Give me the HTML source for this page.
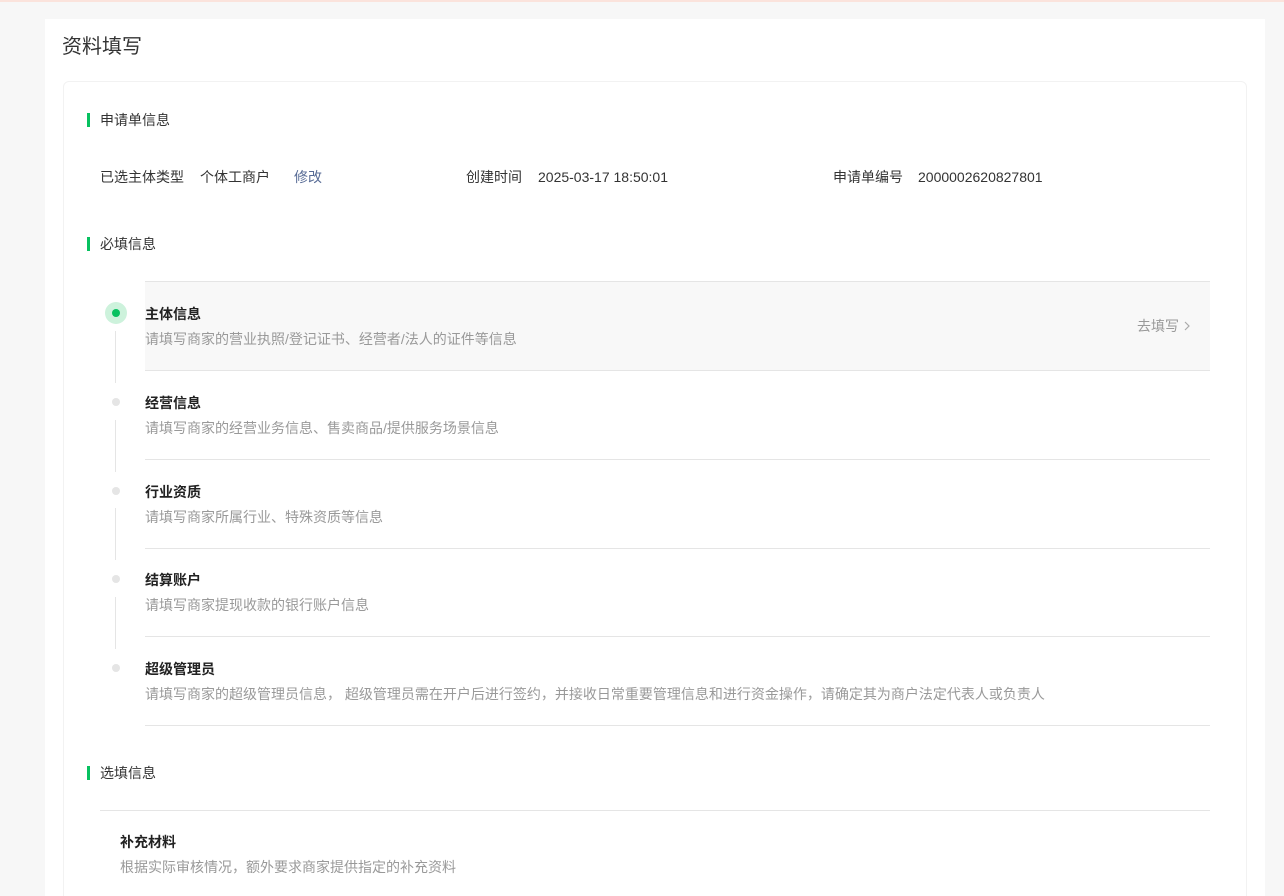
<!DOCTYPE html>
<html><head><meta charset="utf-8"><style>
*{margin:0;padding:0;box-sizing:border-box}
html,body{width:1284px;height:896px;overflow:hidden}
body{background:#f7f7f7;font-family:"Liberation Sans","Noto Sans CJK SC",sans-serif;color:#333;position:relative}
.a{position:absolute;white-space:nowrap}
.topline{position:absolute;left:0;top:0;width:1284px;height:2px;background:#fbe3dc}
.panel{position:absolute;left:45px;top:19px;width:1220px;height:877px;background:#fff}
.card{position:absolute;left:63px;top:81px;width:1184px;height:830px;border:1px solid #f2f2f2;border-radius:6px;background:#fff}
.sec{position:absolute;left:87px;font-size:14px;color:#333;line-height:14px;padding-left:13px}
.sec:before{content:"";position:absolute;left:0;top:0;width:3px;height:14px;background:#07c160}
.t{font-size:14px;line-height:14px}
.row{position:absolute;left:145px;width:1065px;height:89px;border-bottom:1px solid #e5e5e5}
.row b{position:absolute;left:0;top:25px;font-size:14px;color:#222;line-height:14px}
.row span{position:absolute;left:0;top:50px;font-size:14px;color:#999;line-height:14px;white-space:nowrap}
.dot{position:absolute;left:112px;width:8px;height:8px;border-radius:50%;background:#e5e5e5}
.vl{position:absolute;left:115px;width:1px;height:52px;background:#e5e5e5}
</style></head><body>
<div class="topline"></div>
<div class="panel"></div>
<div class="card"></div>
<div class="a" style="left:62px;top:35px;font-size:20px;line-height:24px;color:#333">资料填写</div>
<div class="sec" style="top:113px">申请单信息</div>
<div class="a t" style="left:100px;top:170px">已选主体类型</div>
<div class="a t" style="left:200px;top:170px">个体工商户</div>
<div class="a t" style="left:294px;top:170px;color:#576b95">修改</div>
<div class="a t" style="left:466px;top:170px">创建时间</div>
<div class="a t" style="left:538px;top:170px">2025-03-17 18:50:01</div>
<div class="a t" style="left:833px;top:170px">申请单编号</div>
<div class="a t" style="left:918px;top:170px">2000002620827801</div>
<div class="sec" style="top:237px">必填信息</div>
<div style="position:absolute;left:145px;top:281px;width:1065px;height:1px;background:#e5e5e5"></div>
<div class="row" style="top:282px;background:#f8f8f8"><b>主体信息</b><span>请填写商家的营业执照/登记证书、经营者/法人的证件等信息</span>
<div class="a" style="left:992px;top:37px;font-size:14px;color:#999;line-height:14px">去填写 <svg width="8" height="10" viewBox="0 0 8 10"><path d="M2 1l4 4-4 4" fill="none" stroke="#aaa" stroke-width="1.2"/></svg></div></div>
<div class="row" style="top:371px"><b>经营信息</b><span>请填写商家的经营业务信息、售卖商品/提供服务场景信息</span></div>
<div class="row" style="top:460px"><b>行业资质</b><span>请填写商家所属行业、特殊资质等信息</span></div>
<div class="row" style="top:548px"><b>结算账户</b><span>请填写商家提现收款的银行账户信息</span></div>
<div class="row" style="top:637px"><b>超级管理员</b><span>请填写商家的超级管理员信息， 超级管理员需在开户后进行签约，并接收日常重要管理信息和进行资金操作，请确定其为商户法定代表人或负责人</span></div>
<div style="position:absolute;left:105px;top:302px;width:22px;height:22px;border-radius:50%;background:#cdf2dc"></div>
<div style="position:absolute;left:112px;top:309px;width:8px;height:8px;border-radius:50%;background:#07c160"></div>
<div class="vl" style="top:331px"></div>
<div class="dot" style="top:398px"></div><div class="vl" style="top:420px"></div>
<div class="dot" style="top:487px"></div><div class="vl" style="top:508px"></div>
<div class="dot" style="top:575px"></div><div class="vl" style="top:597px"></div>
<div class="dot" style="top:664px"></div>
<div class="sec" style="top:766px">选填信息</div>
<div style="position:absolute;left:100px;top:810px;width:1110px;height:1px;background:#e5e5e5"></div>
<div class="a" style="left:120px;top:835px;font-size:14px;font-weight:bold;color:#222;line-height:14px">补充材料</div>
<div class="a" style="left:120px;top:860px;font-size:14px;color:#999;line-height:14px">根据实际审核情况，额外要求商家提供指定的补充资料</div>
</body></html>
